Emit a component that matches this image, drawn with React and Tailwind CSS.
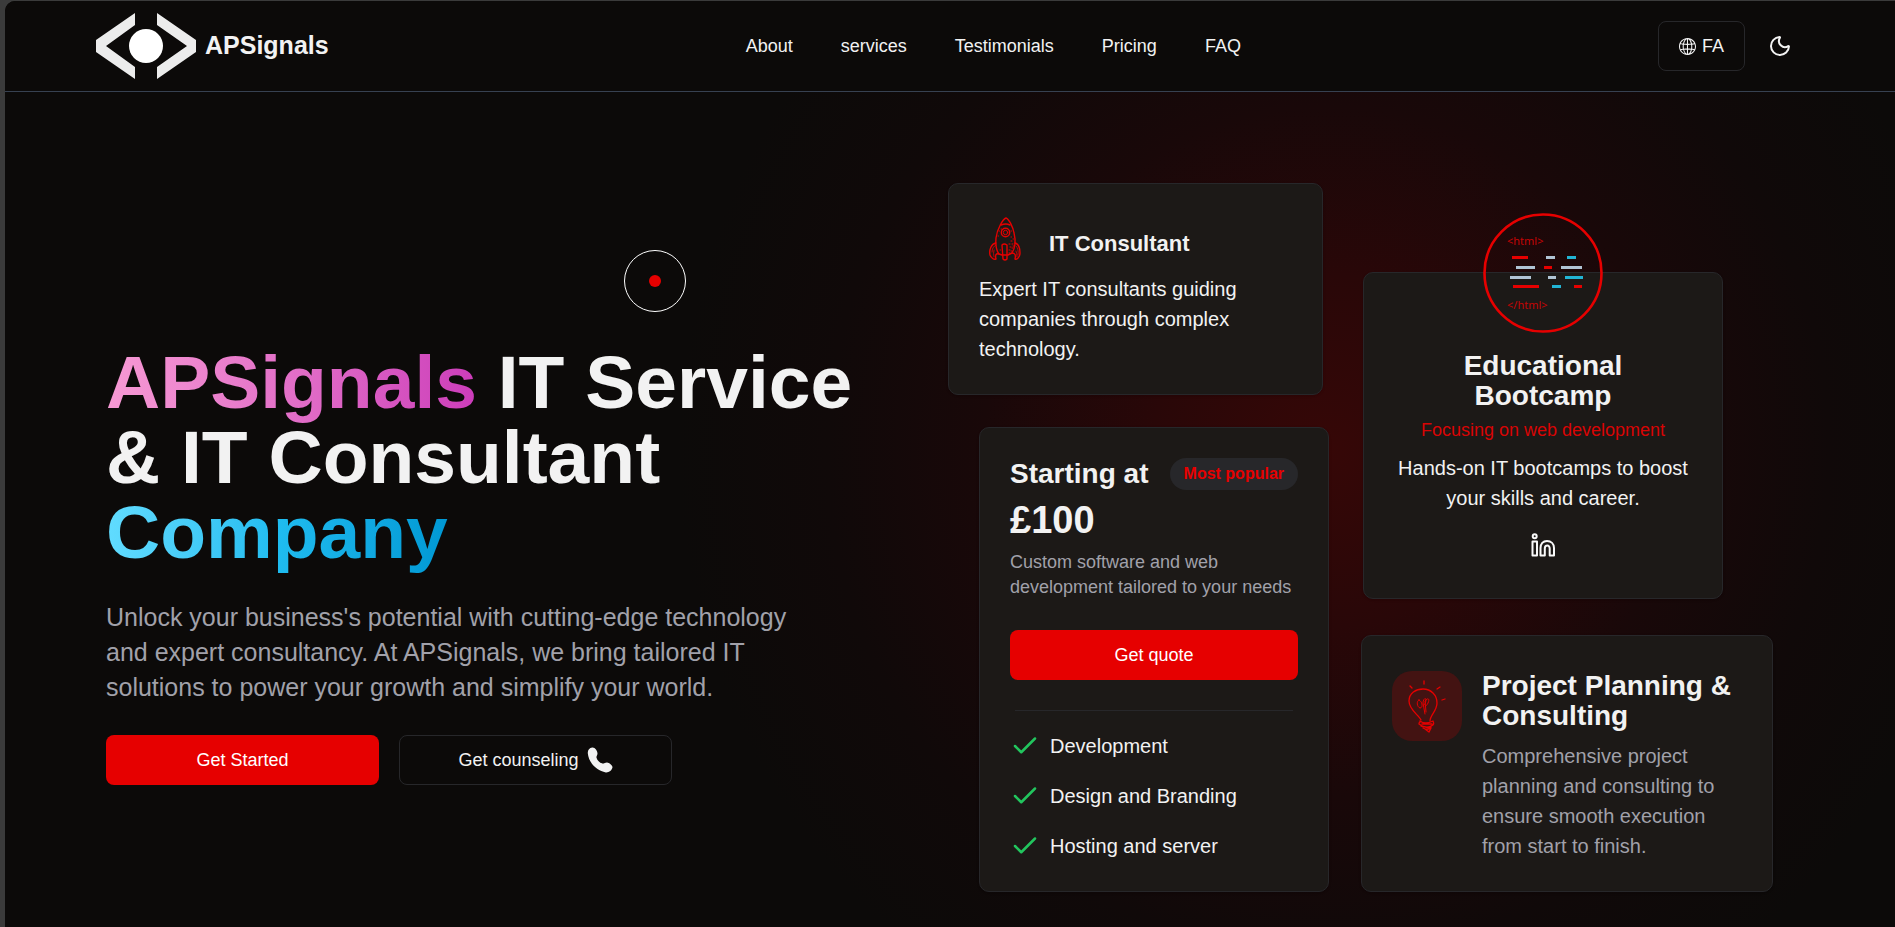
import { Moon, Check } from "lucide-react";
import { SlGlobe } from "react-icons/sl";

const navItems = ["About", "services", "Testimonials", "Pricing", "FAQ"];
const features = ["Development", "Design and Branding", "Hosting and server"];

function Logo() {
  return (
    <svg viewBox="0 0 100 66" className="h-[66px] w-[100px]" aria-hidden="true">
      <path d="M39 0V12L10 33L39 54V66L0 39V27Z" fill="#ececec" />
      <path d="M61 0V12L91 33L61 54V66L100 39V27Z" fill="#ececec" />
      <circle cx="50" cy="33" r="17" fill="#fff" />
    </svg>
  );
}

function Phone() {
  return (
    <svg viewBox="0 0 26 26" className="size-[26px]" fill="currentColor" aria-hidden="true">
      <path d="M5.200 .6C2.400 .9 .6 3.200 .8 6.300C1.600 15.500 9.500 23.800 18.800 25.400C21.800 25.700 25 23.400 25.500 20.300C25.700 18.600 22.200 15.700 20.100 15.500C18.300 15.400 17 16.800 15.300 16.500C12.500 15.600 10.300 13.400 9.500 10.700C9.200 9.200 10.500 8.200 10.500 6.600C10.400 3.800 8 .3 5.200 .6Z" />
    </svg>
  );
}

function Rocket() {
  return (
    <svg viewBox="0 0 32 44" className="h-11 w-8" fill="none" stroke="#e60000" strokeWidth="1.4" strokeLinejoin="round" strokeLinecap="round" aria-hidden="true">
      <path d="M17 1C14 2 8 12 7 21C6 28 8 35 10 37L13 38L19 38L23 36C26 31 27 24 25 16C24 10 20 2 17 1Z" />
      <path d="M12 8Q17 6 21 8" />
      <circle cx="16.500" cy="15.500" r="4.200" />
      <circle cx="16.500" cy="15.500" r="2.200" strokeWidth="1" />
      <path d="M7 26C2 27 0 33 1 38C2 41 5 43 7 42C6 38 7 36 10 37" />
      <path d="M3 35Q3 30 7 28M5 40Q4 36 5 33" strokeWidth="0.800" />
      <path d="M26 26C30 27 31 32 31 36C31 40 28 43 26 42C27 38 26 36 23 36" />
      <path d="M29 38Q30 32 27 29M28 40Q28 36 27 34" strokeWidth="0.800" />
      <path d="M13 28Q15 26 18 28L18 42Q16 44 14 42Z" />
      <path d="M20 27h1M22 24h1M23 27h1M21 30h1M23 31h1M20 33h1M22 34h1M24 22h.5M22 20h.5M24 29h.5M20 36h1M10 14h.5M9 19h.5M12 12h.5M22 14h.5M11 33h.5" strokeWidth="1" />
    </svg>
  );
}

function CodeWindow() {
  const bars = [
    [29, 43, 16, "#e60000"], [63, 43, 9, "#b0c4d4"], [84, 43, 9, "#22b4d4"],
    [33, 53, 19, "#b0c4d4"], [61, 53, 8, "#e60000"], [78, 53, 21, "#b0c4d4"],
    [27, 63, 21, "#b0c4d4"], [65, 63, 8, "#b0c4d4"], [82, 63, 18, "#22b4d4"],
    [30, 72, 26, "#e60000"], [69, 72, 9, "#22b4d4"], [91, 72, 8, "#e60000"],
  ];
  return (
    <svg viewBox="0 0 120 120" className="size-[120px] font-['Noto_Sans',sans-serif] text-[11px]" aria-hidden="true">
      <circle cx="60" cy="60" r="58.500" fill="none" stroke="#e60000" strokeWidth="2.600" />
      {bars.map(([x, y, w, c]) => (
        <rect key={`${x}-${y}`} x={x} y={y} width={w} height="3" fill={c} />
      ))}
      <text x="24" y="32" fill="#c40404">&lt;html&gt;</text>
      <text x="24" y="96" fill="#c40404">&lt;/html&gt;</text>
    </svg>
  );
}

function Bulb() {
  return (
    <svg viewBox="0 0 70 70" className="size-[70px]" fill="none" stroke="#e60000" strokeWidth="1.300" strokeLinecap="round" strokeLinejoin="round" aria-hidden="true">
      <path d="M29 49C27 44 17 39 17 30C17 22 24 18 31 18C39 18 45 24 45 32C45 40 38 44 38 50" />
      <path d="M32 10v3M18 15l2 2M45 18l3-2M50 29l3-1" />
      <path d="M27 29c-3 1-2 7 1 8c3 0 3-6-1-8ZM33 43L31 32c0-4 3-6 3-3c0 3-2 5-2 5M34 41L33 30c3-4 5-2 3 2c-1 3-3 3-3 3" strokeWidth="1" />
      <path d="M28 50Q33 54 41 50Q43 54 39 55Q33 58 27 53Q27 50 30 51M29 55L38 57M31 57Q36 60 39 56M33 58L37 61L39 57M30 53L40 53" />
    </svg>
  );
}

function LinkedInOutline() {
  return (
    <svg viewBox="0 0 24 24" className="size-6" fill="none" stroke="#fafafa" strokeWidth="2" strokeLinejoin="round" aria-hidden="true">
      <circle cx="3.700" cy="3.300" r="2" />
      <path d="M1.500 8.500h4.500v14H1.500Z" />
      <path d="M9.500 22.500V15C9.500 10.800 12 8 16 8C20 8 23 10.800 23 15V22.500H18.700V15.500C18.700 13.800 17.700 12.600 16.300 12.600C15 12.600 13.800 13.800 13.800 15.500V22.500Z" />
    </svg>
  );
}

const card = "rounded-[10px] border border-[#27272a] bg-[#1c1917] shadow-sm";

export default function App() {
  return (
    <div className="min-h-screen bg-[#3b3b3b] pt-px pl-[5px] font-['Liberation_Sans',Arial,sans-serif] text-[#f2f2f2]">
      <div className="relative min-h-[calc(100vh-1px)] overflow-hidden rounded-tl-[10px] bg-[#0c0a09]">
        <header className="border-b border-[#374151] bg-[#0c0a09]">
          <div className="flex h-[90px] items-center justify-between pr-[90px] pl-[91px]">
            <a href="#home" className="flex items-center gap-[9px] text-[25px] font-bold">
              <Logo />
              APSignals
            </a>
            <nav className="flex gap-12 text-lg">
              {navItems.map((item) => (
                <a key={item} href={`#${item.toLowerCase()}`}>{item}</a>
              ))}
            </nav>
            <div className="flex items-center gap-[10px]">
              <button type="button" className="flex h-[50px] items-center gap-1.5 rounded-lg border border-[#27272a] px-5 text-lg">
                <SlGlobe size={17} />
                FA
              </button>
              <button type="button" aria-label="Toggle theme" className="flex size-[50px] items-center justify-center">
                <Moon size={24} />
              </button>
            </div>
          </div>
        </header>

        <main className="flex items-center justify-between bg-[radial-gradient(circle_650px_at_70%_43%,#360707_0%,#290708_27%,#190809_53%,#100909_77%,#0c0a09_100%)] pt-[91px] pr-[122px] pb-[35px] pl-[101px]">
          <section className="max-w-[760px] pt-[55px]">
            <h1 className="text-[75px] leading-none font-bold">
              <span className="bg-linear-to-r from-[#f79ad4] to-[#cc3cba] bg-clip-text text-transparent">APSignals</span>{" "}
              IT Service &amp; IT Consultant{" "}
              <span className="bg-linear-to-r from-[#61dcff] via-[#1fbcf0] to-[#0098d4] bg-clip-text text-transparent">Company</span>
            </h1>
            <p className="mt-[30px] max-w-[710px] text-[25px] leading-[35px] text-[#a1a1aa]">
              Unlock your business's potential with cutting-edge technology and expert consultancy. At APSignals, we bring tailored IT solutions to power your growth and simplify your world.
            </p>
            <div className="mt-[30px] flex gap-5 text-lg">
              <button type="button" className="h-[50px] w-[273px] rounded-lg bg-[#e60000] text-white">Get Started</button>
              <button type="button" className="flex h-[50px] w-[273px] items-center justify-center gap-2 rounded-lg border border-[#27272a]">
                Get counseling
                <Phone />
              </button>
            </div>
          </section>

          <section className="flex items-end gap-8">
            <div className="flex flex-col gap-8">
              <article className={`${card} h-[212px] w-[375px] px-[30px] pt-[30px]`}>
                <div className="flex h-[50px] items-center gap-7 pl-[10px]">
                  <Rocket />
                  <h2 className="pt-2 text-[22px] font-bold">IT Consultant</h2>
                </div>
                <p className="mt-[10px] text-xl leading-[30px]">Expert IT consultants guiding companies through complex technology.</p>
              </article>
              <article className={`${card} ml-[31px] h-[465px] w-[350px] p-[30px]`}>
                <div className="flex items-center justify-between">
                  <h2 className="text-[28px] leading-8 font-bold">Starting at</h2>
                  <span className="rounded-full bg-[#27272a] px-3.5 text-base leading-8 font-bold text-[#e60000]">Most popular</span>
                </div>
                <div className="mt-2 text-[38px] leading-[44px] font-bold">£100</div>
                <p className="mt-2 text-lg leading-[25px] text-[#a1a1aa]">Custom software and web development tailored to your needs</p>
                <button type="button" className="mt-[30px] h-[50px] w-full rounded-lg bg-[#e60000] text-lg text-white">Get quote</button>
                <hr className="mx-[5px] mt-[30px] border-[#27272a]" />
                <ul className="mt-5 flex flex-col gap-5 text-xl leading-[30px]">
                  {features.map((f) => (
                    <li key={f} className="flex items-center gap-[10px]">
                      <Check size={30} className="text-[#22c55e]" />
                      {f}
                    </li>
                  ))}
                </ul>
              </article>
            </div>
            <div className="flex flex-col gap-9">
              <article className={`${card} relative ml-0.5 flex h-[327px] w-[360px] flex-col items-center px-[30px] pt-[78px] text-center`}>
                <div className="absolute -top-[60px] left-1/2 -translate-x-1/2">
                  <CodeWindow />
                </div>
                <h2 className="w-[200px] text-[28px] leading-[30px] font-bold">Educational Bootcamp</h2>
                <p className="mt-[7px] text-lg leading-[25px] text-[#d80404]">Focusing on web development</p>
                <p className="mt-[10px] text-xl leading-[30px]">Hands-on IT bootcamps to boost your skills and career.</p>
                <a href="#linkedin" aria-label="LinkedIn" className="mt-5">
                  <LinkedInOutline />
                </a>
              </article>
              <article className={`${card} flex h-[257px] w-[412px] items-start gap-5 px-[30px] pt-[35px]`}>
                <div className="shrink-0 rounded-[20px] bg-[#431312]">
                  <Bulb />
                </div>
                <div>
                  <h2 className="text-[28px] leading-[30px] font-bold">Project Planning &amp; Consulting</h2>
                  <p className="mt-[10px] text-xl leading-[30px] text-[#a1a1aa]">Comprehensive project planning and consulting to ensure smooth execution from start to finish.</p>
                </div>
              </article>
            </div>
          </section>
        </main>

        <div className="pointer-events-none absolute top-[249px] left-[619px] flex size-[62px] items-center justify-center rounded-full border border-white">
          <span className="size-3 rounded-full bg-[#e60000]" />
        </div>
      </div>
    </div>
  );
}
